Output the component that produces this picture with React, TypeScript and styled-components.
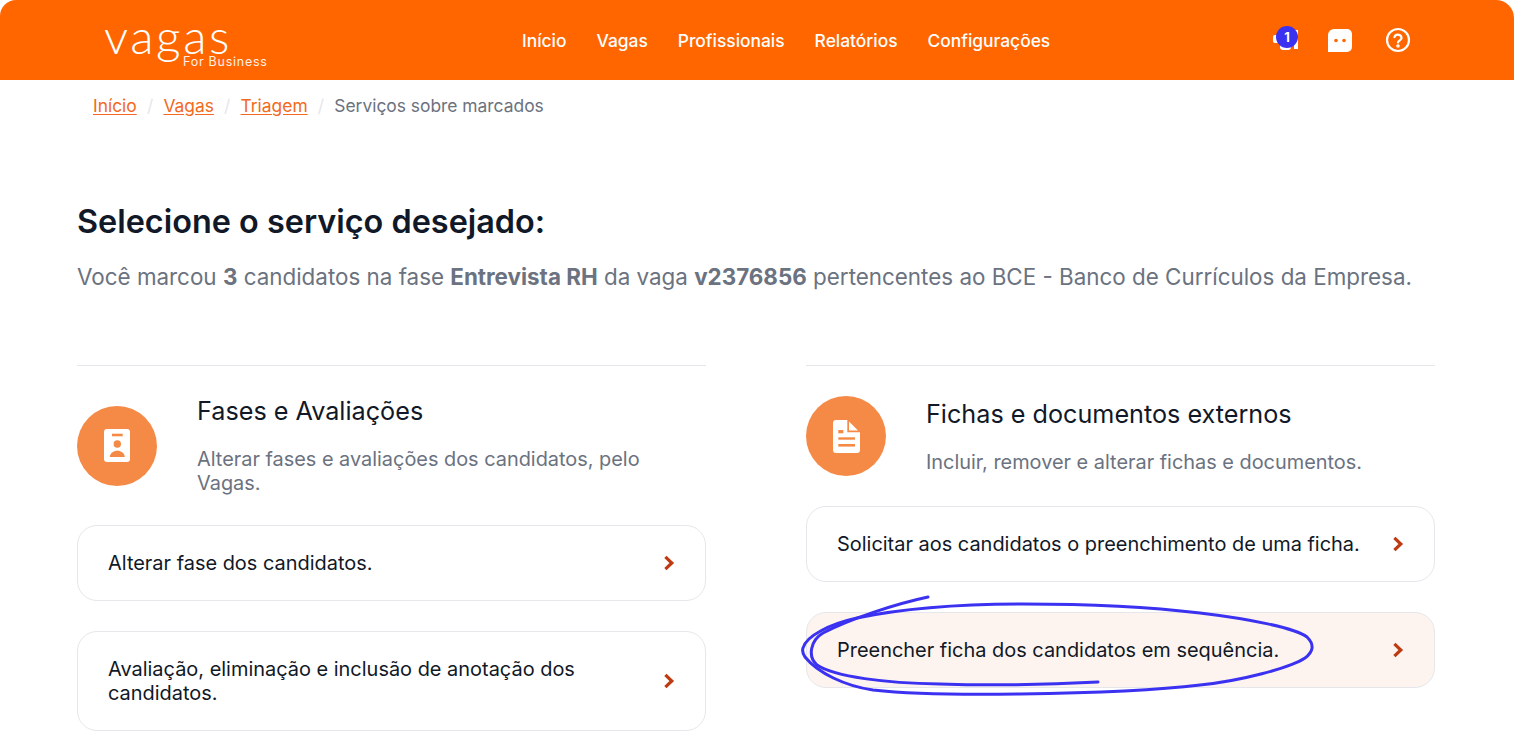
import React from "react";
import styled, { createGlobalStyle } from "styled-components";

const Global = createGlobalStyle`
  html, body { margin: 0; padding: 0; background: #fff; height: 100%; overflow: hidden; }
  body { font-family: Inter, "Liberation Sans", sans-serif; }
  * { box-sizing: border-box; }
`;
const Page = styled.div`
  position: relative; width: 1514px; height: 745px; overflow: hidden; background: #fff;
`;
const Header = styled.header`
  height: 80px; background: #ff6600; border-radius: 16px 18px 0 0;
  display: flex; align-items: center; padding: 0 103px 0 104px;
`;
const Logo = styled.div`
  width: 164px; height: 80px; position: relative; color: #fff; flex: none;
`;
const LogoWord = styled.span`
  position: absolute; left: 0; top: 7px; font: 300 48px/58px Lato, sans-serif; letter-spacing: 2.6px;
`;
const LogoSub = styled.span`
  position: absolute; left: 79px; top: 54px; font: 400 12.5px/15px Inter, sans-serif; letter-spacing: 0.75px; opacity: .9; white-space: nowrap;
`;
const Nav = styled.nav`
  display: flex; gap: 30px; margin-left: 254px; padding-top: 2px; color: #fff; font-size: 17.4px; font-weight: 500; line-height: 20px;
`;
const Actions = styled.div`
  margin-left: auto; display: flex; align-items: center; gap: 32px;
`;
const IconBtn = styled.div<{ $tight?: boolean }>`
  position: relative; width: 26px; height: 26px; display: flex; align-items: center; justify-content: center;
  margin-right: ${p => (p.$tight ? "-4px" : "0")};
`;
const Badge = styled.span`
  position: absolute; left: 3px; top: -1px; width: 22px; height: 22px; border-radius: 50%;
  background: #3b31f0; color: #fff; font-size: 13px; font-weight: 700; display: flex; align-items: center; justify-content: center;
`;
const Crumbs = styled.div`
  display: flex; align-items: center; height: 50px; padding: 2px 0 0 93px; font-size: 17.4px; color: #6b7280; line-height: 24px;
`;
const Crumb = styled.a`
  color: #f26a21; text-decoration: underline; text-underline-offset: 2px;
`;
const Sep = styled.span`
  color: #e5e7eb; margin: 0 10.2px;
`;
const Main = styled.main`
  padding: 72px 79px 0 77px;
`;
const Title = styled.h1`
  margin: 0; font-size: 32.4px; line-height: 40px; font-weight: 600; color: #111827;
`;
const Lead = styled.p`
  margin: 20px 0 0; font-size: 22.4px; line-height: 30px; color: #6b7280; white-space: nowrap;
  b { font-weight: 700; }
`;
const Columns = styled.div`
  display: grid; grid-template-columns: 629px 629px; gap: 100px; margin-top: 73px;
`;
const Column = styled.section`
  border-top: 1px solid #e5e7eb;
`;
const Intro = styled.div`
  display: flex; align-items: center; gap: 40px; padding: 30px 0;
`;
const Circle = styled.div`
  width: 80px; height: 80px; flex: none; border-radius: 50%; background: #f58a47;
  display: flex; align-items: center; justify-content: center;
`;
const IntroTitle = styled.h2`
  margin: 0 0 21px; font-size: 25.2px; line-height: 30px; font-weight: 400; color: #111827;
`;
const IntroText = styled.p`
  margin: 0; font-size: 19.9px; line-height: 24px; color: #6b7280;
`;
const Card = styled.div<{ $active?: boolean }>`
  display: flex; align-items: center; justify-content: space-between; margin-bottom: 30px;
  padding: 25px 30px; border: 1px solid #e5e7eb; border-radius: 20px;
  background: ${p => (p.$active ? "#fdf4ef" : "#fff")};
  font-size: 19.95px; line-height: 24px; color: #111827;
`;
const CardLabel = styled.span`
  max-width: 530px;
`;
const Scribble = styled.svg`
  position: absolute; left: 0; top: 0; pointer-events: none;
`;

const Chevron = () => (
  <svg width="12" height="16" viewBox="0 0 12 16" fill="none">
    <path d="M2.4 1.8 8.8 8 2.4 14.2" stroke="#bd3b12" strokeWidth="3.2" />
  </svg>
);

export default function App() {
  return (
    <Page>
      <Global />
      <Header>
        <Logo>
          <LogoWord>vagas</LogoWord>
          <LogoSub>For Business</LogoSub>
        </Logo>
        <Nav>
          <span>Início</span><span>Vagas</span><span>Profissionais</span><span>Relatórios</span><span>Configurações</span>
        </Nav>
        <Actions>
          <IconBtn $tight>
            <svg width="26" height="26" viewBox="0 0 26 26" fill="#fff">
              <rect x="0" y="8" width="6" height="8" rx="2" />
              <rect x="7" y="16" width="11" height="7" rx="3" />
              <rect x="21" y="3" width="4" height="19" />
            </svg>
            <Badge>1</Badge>
          </IconBtn>
          <IconBtn>
            <svg width="26" height="26" viewBox="0 0 26 26">
              <path d="M7 2h13a5 5 0 0 1 5 5v13a5 5 0 0 1-5 5H1V8a6 6 0 0 1 6-6z" fill="#fff" />
              <circle cx="9" cy="13.5" r="1.8" fill="#ff6600" />
              <circle cx="17" cy="13.5" r="1.8" fill="#ff6600" />
            </svg>
          </IconBtn>
          <IconBtn>
            <svg width="26" height="26" viewBox="0 0 26 26" fill="none" stroke="#fff" strokeWidth="2.2">
              <circle cx="13" cy="13" r="11" />
              <path d="M9.4 10.2a3.7 3.7 0 0 1 7.2.6c0 2.4-3.6 2.6-3.6 4.8" strokeLinecap="round" />
              <circle cx="13" cy="19" r=".7" fill="#fff" />
            </svg>
          </IconBtn>
        </Actions>
      </Header>
      <Crumbs>
        <Crumb>Início</Crumb><Sep>/</Sep><Crumb>Vagas</Crumb><Sep>/</Sep><Crumb>Triagem</Crumb><Sep>/</Sep>
        <span>Serviços sobre marcados</span>
      </Crumbs>
      <Main>
        <Title>Selecione o serviço desejado:</Title>
        <Lead>
          Você marcou <b>3</b> candidatos na fase <b>Entrevista RH</b> da vaga <b>v2376856</b> pertencentes ao BCE - Banco de Currículos da Empresa.
        </Lead>
        <Columns>
          <Column>
            <Intro>
              <Circle>
                <svg width="26" height="33" viewBox="0 0 26 33">
                  <rect width="26" height="33" rx="3" fill="#fff" />
                  <rect x="8" y="4.7" width="10.7" height="2.6" fill="#f58a47" />
                  <circle cx="13.3" cy="15" r="3.7" fill="#f58a47" />
                  <path d="M5.7 28c.4-4 3.6-6.3 7.6-6.3s7.2 2.3 7.6 6.3z" fill="#f58a47" />
                </svg>
              </Circle>
              <div>
                <IntroTitle>Fases e Avaliações</IntroTitle>
                <IntroText>Alterar fases e avaliações dos candidatos, pelo Vagas.</IntroText>
              </div>
            </Intro>
            <Card><CardLabel>Alterar fase dos candidatos.</CardLabel><Chevron /></Card>
            <Card><CardLabel>Avaliação, eliminação e inclusão de anotação dos candidatos.</CardLabel><Chevron /></Card>
          </Column>
          <Column>
            <Intro>
              <Circle>
                <svg width="27" height="33" viewBox="0 0 27 33">
                  <path d="M3 0h11.3v12.3H27V30a3 3 0 0 1-3 3H3a3 3 0 0 1-3-3V3a3 3 0 0 1 3-3z" fill="#fff" />
                  <path d="M16 1.5 25 10.5H16z" fill="#fff" />
                  <rect x="5.3" y="10" width="5" height="3.3" fill="#f58a47" />
                  <rect x="5.3" y="17.3" width="16.7" height="2.4" fill="#f58a47" />
                  <rect x="5.3" y="24" width="16.7" height="2.6" fill="#f58a47" />
                </svg>
              </Circle>
              <div>
                <IntroTitle>Fichas e documentos externos</IntroTitle>
                <IntroText>Incluir, remover e alterar fichas e documentos.</IntroText>
              </div>
            </Intro>
            <Card><CardLabel>Solicitar aos candidatos o preenchimento de uma ficha.</CardLabel><Chevron /></Card>
            <Card $active><CardLabel>Preencher ficha dos candidatos em sequência.</CardLabel><Chevron /></Card>
          </Column>
        </Columns>
      </Main>
      <Scribble width="1514" height="745" viewBox="0 0 1514 745" fill="none" stroke="#3b31f0" strokeWidth="3" strokeLinecap="round">
        <path d="M928 597C895 604 850 619 823 633C811 640 807 656 817 665C835 677 885 683 940 684C1000 686 1060 684 1098 682" />
        <path d="M803 648C806 636 830 624 857 618C900 609 960 604 1023 604C1090 604 1150 607 1200 613C1250 619 1295 628 1307 637C1315 645 1313 652 1305 658C1290 668 1240 681 1200 685C1150 691 1090 693 1020 694C960 695 910 694 873 690C845 686 818 673 805 657C803 654 802 651 803 648Z" />
      </Scribble>
    </Page>
  );
}
